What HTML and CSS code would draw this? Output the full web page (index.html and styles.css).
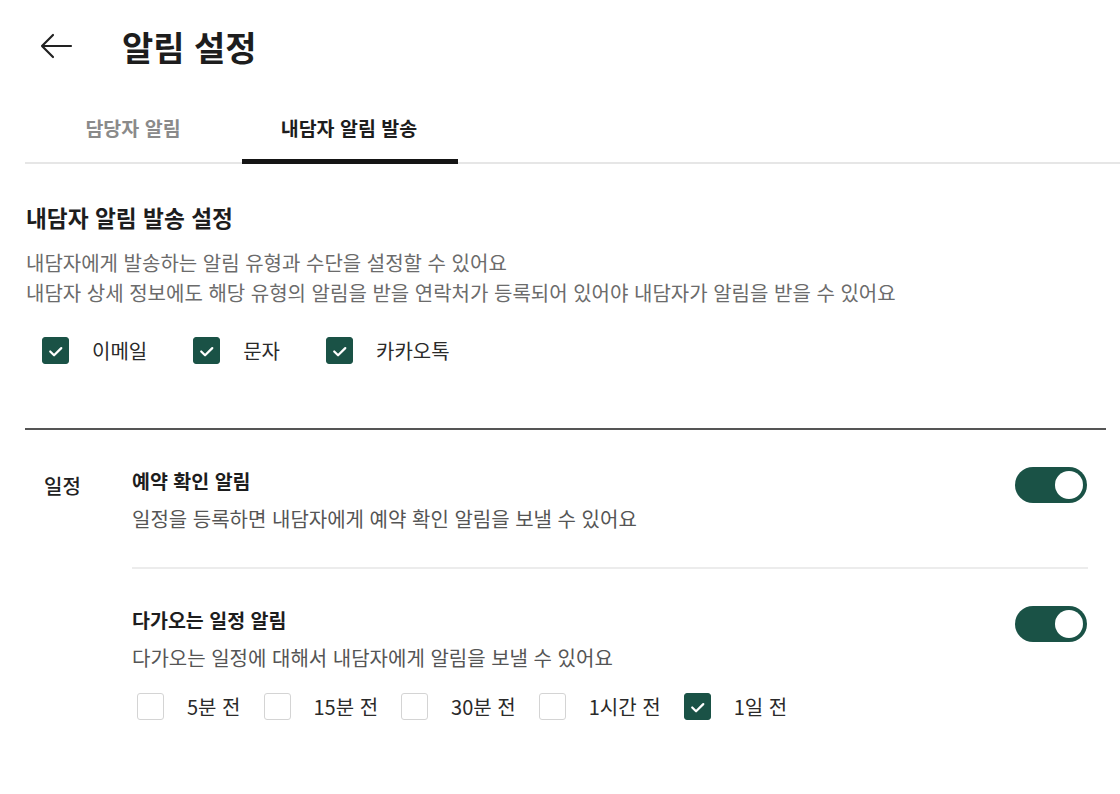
FILE: index.html
```html
<!DOCTYPE html>
<html lang="ko">
<head>
<meta charset="utf-8">
<link rel="stylesheet" href="styles.css">
</head>
<body>
<div class="page">
  <header class="header">
    <svg class="back" width="34" height="26" viewBox="0 0 34 26" fill="none" stroke="#222" stroke-width="2.2" stroke-linecap="round" stroke-linejoin="round">
      <path d="M32 13H3M14 2L3 13L14 24"/>
    </svg>
    <h1 class="title">알림 설정</h1>
  </header>

  <nav class="tabs">
    <div class="tab">담당자 알림</div>
    <div class="tab active">내담자 알림 발송</div>
  </nav>

  <section class="send">
    <h2 class="sec-title">내담자 알림 발송 설정</h2>
    <p class="desc">내담자에게 발송하는 알림 유형과 수단을 설정할 수 있어요<br>내담자 상세 정보에도 해당 유형의 알림을 받을 연락처가 등록되어 있어야 내담자가 알림을 받을 수 있어요</p>
    <div class="methods">
      <label class="chk"><span class="box on"><svg viewBox="0 0 26 26"><path d="M7.5 13.5l4 4L19 10"/></svg></span><span>이메일</span></label>
      <label class="chk"><span class="box on"><svg viewBox="0 0 26 26"><path d="M7.5 13.5l4 4L19 10"/></svg></span><span>문자</span></label>
      <label class="chk"><span class="box on"><svg viewBox="0 0 26 26"><path d="M7.5 13.5l4 4L19 10"/></svg></span><span>카카오톡</span></label>
    </div>
  </section>

  <section class="schedule">
    <div class="group-label">일정</div>
    <div class="items">
      <div class="item">
        <div class="item-head">
          <div>
            <h3 class="item-title">예약 확인 알림</h3>
            <p class="item-desc">일정을 등록하면 내담자에게 예약 확인 알림을 보낼 수 있어요</p>
          </div>
          <span class="toggle"><span class="knob"></span></span>
        </div>
      </div>
      <div class="item">
        <div class="item-head">
          <div>
            <h3 class="item-title">다가오는 일정 알림</h3>
            <p class="item-desc">다가오는 일정에 대해서 내담자에게 알림을 보낼 수 있어요</p>
          </div>
          <span class="toggle"><span class="knob"></span></span>
        </div>
        <div class="times">
          <label class="chk"><span class="box"></span><span>5분 전</span></label>
          <label class="chk"><span class="box"></span><span>15분 전</span></label>
          <label class="chk"><span class="box"></span><span>30분 전</span></label>
          <label class="chk"><span class="box"></span><span>1시간 전</span></label>
          <label class="chk"><span class="box on"><svg viewBox="0 0 26 26"><path d="M7.5 13.5l4 4L19 10"/></svg></span><span>1일 전</span></label>
        </div>
      </div>
    </div>
  </section>
</div>
</body>
</html>
```

FILE: styles.css
```css
* { box-sizing: border-box; }
html, body { margin: 0; padding: 0; background: #fff; }
body {
  font-family: "Noto Sans CJK KR", "Noto Sans", sans-serif;
  color: #222;
}
.page { width: 1120px; height: 794px; overflow: hidden; }

.header {
  display: flex;
  align-items: center;
  height: 92px;
  padding-left: 39px;
}
.back { display: block; }
.title {
  margin: 0 0 0 49px;
  font-size: 34px;
  font-weight: 700;
  color: #1d1d1d;
}

.tabs {
  display: flex;
  margin-left: 25px;
  border-bottom: 2px solid #e6e6e6;
}
.tab {
  width: 216px;
  height: 70px;
  display: flex;
  align-items: center;
  justify-content: center;
  font-size: 19.5px;
  font-weight: 700;
  color: #8a8a8a;
  position: relative;
}
.tab.active { color: #1d1d1d; }
.tab.active::after {
  content: "";
  position: absolute;
  left: 1px; right: -1px; bottom: -2px;
  height: 5px;
  background: #151515;
}

.send {
  margin: 0 14px 0 25px;
  padding-top: 38px;
  padding-bottom: 63px;
  border-bottom: 2px solid #555;
}
.sec-title {
  margin: 0 0 0 1px;
  font-size: 22.7px;
  font-weight: 700;
  line-height: 32px;
  color: #1d1d1d;
}
.desc {
  margin: 14px 0 0 1px;
  font-size: 20px;
  line-height: 30px;
  color: #6b6b6b;
}
.methods {
  display: flex;
  gap: 46px;
  margin: 28px 0 0 17px;
}
.chk {
  display: flex;
  align-items: center;
  gap: 23px;
  font-size: 20px;
  color: #2a2a2a;
}
.box {
  width: 27px;
  height: 27px;
  border: 1.5px solid #d4d4d4;
  border-radius: 3px;
  display: flex;
  align-items: center;
  justify-content: center;
  background: #fff;
}
.box.on { background: #1a5246; border-color: #1a5246; }
.box svg { width: 26px; height: 26px; fill: none; stroke: #fff; stroke-width: 2.3; stroke-linecap: round; stroke-linejoin: round; }

.schedule {
  display: flex;
  margin: 0 32px 0 44px;
  padding-top: 37px;
}
.group-label {
  width: 88px;
  font-size: 20px;
  font-weight: 500;
  line-height: 28px;
  padding-top: 5px;
  color: #222;
}
.items { flex: 1; }
.item + .item { border-top: 2px solid #ececec; margin-top: 34px; padding-top: 37px; }
.item-head {
  display: flex;
  justify-content: space-between;
  align-items: flex-start;
}
.item-title {
  margin: 0;
  font-size: 19.5px;
  font-weight: 700;
  line-height: 28px;
  color: #1d1d1d;
}
.item-desc {
  margin: 10px 0 0 0;
  font-size: 20px;
  line-height: 28px;
  color: #555;
}
.toggle {
  width: 72px;
  height: 36px;
  border-radius: 18px;
  background: #1a5246;
  display: flex;
  align-items: center;
  justify-content: flex-end;
  padding-right: 4px;
  margin-right: 1px;
}
.knob {
  width: 28px;
  height: 28px;
  border-radius: 50%;
  background: #fff;
}
.times {
  display: flex;
  gap: 23px;
  margin: 20px 0 0 5px;
}
```
